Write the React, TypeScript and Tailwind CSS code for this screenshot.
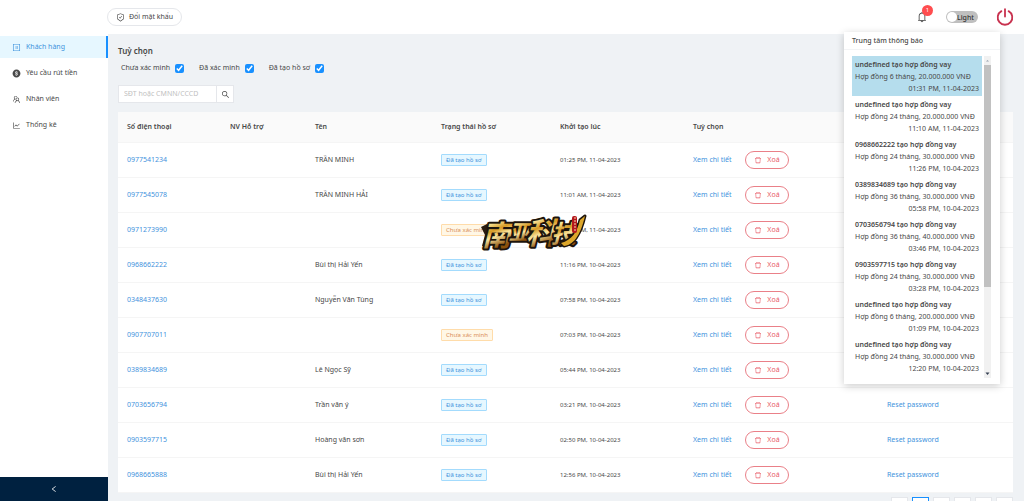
import React from 'react';
import {
  AiFillDollarCircle,
  AiOutlineBell,
  AiOutlineDelete,
  AiOutlineLeft,
  AiOutlineLineChart,
  AiOutlineProfile,
  AiOutlineSafetyCertificate,
  AiOutlineSearch,
  AiOutlineTeam,
} from 'react-icons/ai';

type Status = 'created' | 'unverified';

interface Customer {
  phone: string;
  name: string;
  status: Status;
  createdAt: string;
}

interface Notice {
  title: string;
  detail: string;
  time: string;
}

const customers: Customer[] = [
  { phone: '0977541234', name: 'TRẦN MINH', status: 'created', createdAt: '01:25 PM, 11-04-2023' },
  { phone: '0977545078', name: 'TRẦN MINH HẢI', status: 'created', createdAt: '11:01 AM, 11-04-2023' },
  { phone: '0971273990', name: '', status: 'unverified', createdAt: '12:11 AM, 11-04-2023' },
  { phone: '0968662222', name: 'Bùi thị Hải Yến', status: 'created', createdAt: '11:16 PM, 10-04-2023' },
  { phone: '0348437630', name: 'Nguyễn Văn Tùng', status: 'created', createdAt: '07:58 PM, 10-04-2023' },
  { phone: '0907707011', name: '', status: 'unverified', createdAt: '07:03 PM, 10-04-2023' },
  { phone: '0389834689', name: 'Lê Ngọc Sỹ', status: 'created', createdAt: '05:44 PM, 10-04-2023' },
  { phone: '0703656794', name: 'Trần văn ý', status: 'created', createdAt: '03:21 PM, 10-04-2023' },
  { phone: '0903597715', name: 'Hoàng văn sơn', status: 'created', createdAt: '02:50 PM, 10-04-2023' },
  { phone: '0968665888', name: 'Bùi thị Hải Yến', status: 'created', createdAt: '12:56 PM, 10-04-2023' },
];

const notices: Notice[] = [
  { title: 'undefined tạo hợp đồng vay', detail: 'Hợp đồng 6 tháng, 20.000.000 VNĐ', time: '01:31 PM, 11-04-2023' },
  { title: 'undefined tạo hợp đồng vay', detail: 'Hợp đồng 24 tháng, 20.000.000 VNĐ', time: '11:10 AM, 11-04-2023' },
  { title: '0968662222 tạo hợp đồng vay', detail: 'Hợp đồng 24 tháng, 30.000.000 VNĐ', time: '11:26 PM, 10-04-2023' },
  { title: '0389834689 tạo hợp đồng vay', detail: 'Hợp đồng 36 tháng, 30.000.000 VNĐ', time: '05:58 PM, 10-04-2023' },
  { title: '0703656794 tạo hợp đồng vay', detail: 'Hợp đồng 36 tháng, 40.000.000 VNĐ', time: '03:46 PM, 10-04-2023' },
  { title: '0903597715 tạo hợp đồng vay', detail: 'Hợp đồng 24 tháng, 30.000.000 VNĐ', time: '03:28 PM, 10-04-2023' },
  { title: 'undefined tạo hợp đồng vay', detail: 'Hợp đồng 6 tháng, 200.000.000 VNĐ', time: '01:09 PM, 10-04-2023' },
  { title: 'undefined tạo hợp đồng vay', detail: 'Hợp đồng 24 tháng, 30.000.000 VNĐ', time: '12:20 PM, 10-04-2023' },
];

const menu = [
  { label: 'Khách hàng', icon: AiOutlineProfile, active: true },
  { label: 'Yêu cầu rút tiền', icon: AiFillDollarCircle, active: false },
  { label: 'Nhân viên', icon: AiOutlineTeam, active: false },
  { label: 'Thống kê', icon: AiOutlineLineChart, active: false },
];

const columns = [
  { title: 'Số điện thoại', width: 'w-[103px]' },
  { title: 'NV Hỗ trợ', width: 'w-[85px]' },
  { title: 'Tên', width: 'w-[126px]' },
  { title: 'Trạng thái hồ sơ', width: 'w-[119px]' },
  { title: 'Khởi tạo lúc', width: 'w-[133px]' },
  { title: 'Tuỳ chọn', width: 'w-[194px]' },
  { title: '', width: 'w-[135px]' },
];

const filters = ['Chưa xác minh', 'Đã xác minh', 'Đã tạo hồ sơ'];

const pages = ['Trang trước', 'Trang 1', 'Trang 2', 'Trang 3', 'Trang 4', 'Trang sau'];

const Sidebar: React.FC = () => (
  <aside className="w-[108px] shrink-0 flex flex-col bg-white">
    <nav className="flex-1 flex flex-col gap-1 pt-[2px]">
      {menu.map(({ label, icon: Icon, active }) => (
        <a
          key={label}
          href="#"
          className={
            active
              ? 'h-[22px] flex items-center gap-[5px] pl-3 bg-[#e6f7ff] text-[#3f93dd] border-r-2 border-[#1890ff]'
              : 'h-[22px] flex items-center gap-[5px] pl-3'
          }
        >
          <Icon className="size-[9px]" />
          {label}
        </a>
      ))}
    </nav>
    <button aria-label="Thu gọn" className="h-6 flex items-center justify-center bg-[#002140] text-white">
      <AiOutlineLeft className="size-2" />
    </button>
  </aside>
);

const NoticePanel: React.FC = () => (
  <section className="absolute z-10 top-[32px] right-6 w-[156px] h-[352px] flex flex-col bg-white shadow-[0_2px_8px_rgba(0,0,0,0.2)]">
    <h2 className="h-[18px] px-2 flex items-center font-medium border-b border-gray-100">Trung tâm thông báo</h2>
    <div className="flex-1 flex gap-[2px] pt-[6px] pb-[6px] pl-2 pr-[9px]">
      <ul className="flex-1">
        {notices.map((n, i) => (
          <li key={i} className={i === 0 ? 'h-10 px-[3px] pt-[3px] bg-[#b5dded]' : 'h-10 px-[3px] pt-[3px]'}>
            <p className="leading-[12px] font-semibold whitespace-nowrap">{n.title}</p>
            <p className="leading-[12px] whitespace-nowrap">{n.detail}</p>
            <p className="leading-[11px] text-right">{n.time}</p>
          </li>
        ))}
      </ul>
      <div className="w-[7px] flex flex-col items-center justify-between bg-[#f1f1f1]">
        <svg viewBox="0 0 7 9" className="w-[7px] h-[9px] fill-gray-400">
          <path d="M2 5.5L3.5 4L5 5.5Z" />
        </svg>
        <div className="w-full h-[222px] mb-auto bg-[#c1c1c1]" />
        <svg viewBox="0 0 7 9" className="w-[7px] h-[9px] fill-gray-700">
          <path d="M1.5 3.5H5.5L3.5 6Z" />
        </svg>
      </div>
    </div>
  </section>
);

const PowerIcon: React.FC = () => (
  <svg viewBox="0 0 18 18" className="size-[18px]" fill="none" stroke="currentColor" strokeWidth="1.8" strokeLinecap="round">
    <path d="M5.4 3.1A7.3 7.3 0 1 0 12.6 3.1" />
    <path d="M9 1.2V8.6" />
  </svg>
);

const Header: React.FC = () => (
  <header className="relative h-[34px] shrink-0 flex items-center justify-between pl-[107px] pr-[10px] bg-white">
    <button className="h-[18px] flex items-center gap-1 px-2 rounded-full border border-gray-200">
      <AiOutlineSafetyCertificate className="size-[9px]" />
      Đổi mật khẩu
    </button>
    <div className="flex items-center">
      <button aria-label="Thông báo" className="relative mr-[18px]">
        <AiOutlineBell className="size-3" />
        <span className="absolute -top-[6px] left-[6px] size-[11px] rounded-full bg-[#ff4d4f] text-white text-[6px] leading-[11px] text-center">
          1
        </span>
      </button>
      <button
        role="switch"
        aria-checked="false"
        className="w-8 h-3 mr-[18px] flex items-center justify-between pl-px pr-1 rounded-full bg-[#bfbfbf] text-[#333]"
      >
        <span className="size-[10px] rounded-full bg-white" />
        <span className="font-medium leading-[11px]">Light</span>
      </button>
      <button aria-label="Đăng xuất" className="text-[#c8324f]">
        <PowerIcon />
      </button>
    </div>
    <NoticePanel />
  </header>
);

const StatusTag: React.FC<{ status: Status }> = ({ status }) =>
  status === 'created' ? (
    <span className="inline-block px-1 border border-[#a3dbfd] bg-[#e6f7ff] text-[#3f93dd] text-[6px] leading-[10px] rounded-[1px]">
      Đã tạo hồ sơ
    </span>
  ) : (
    <span className="inline-block px-1 border border-[#ffdcaa] bg-[#fff7e6] text-[#d98d55] text-[6px] leading-[10px] rounded-[1px]">
      Chưa xác minh
    </span>
  );

const CustomerTable: React.FC = () => (
  <table className="w-full table-fixed bg-white text-left">
    <thead>
      <tr className="h-[30px] bg-[#fafafa] border-b border-[#f5f5f5]">
        {columns.map((c, i) => (
          <th key={i} className={`${c.width} pl-[9px] font-semibold`}>
            {c.title}
          </th>
        ))}
      </tr>
    </thead>
    <tbody>
      {customers.map((c) => (
        <tr key={c.phone} className="h-[35px] border-b border-[#f5f5f5]">
          <td className="pl-[9px]">
            <a href="#" className="text-[#3f93dd]">{c.phone}</a>
          </td>
          <td />
          <td className="pl-[9px]">{c.name}</td>
          <td className="pl-[9px]">
            <StatusTag status={c.status} />
          </td>
          <td className="pl-[9px] text-[6px]">{c.createdAt}</td>
          <td className="pl-[9px]">
            <div className="flex items-center gap-3">
              <a href="#" className="w-10 whitespace-nowrap text-[#3f93dd]">Xem chi tiết</a>
              <button className="w-11 h-[18px] flex items-center justify-center gap-[5px] rounded-full border border-[#ea8088] text-[#e85a66]">
                <AiOutlineDelete className="size-2" />
                Xoá
              </button>
            </div>
          </td>
          <td className="pl-[9px]">
            <a href="#" className="text-[#3f93dd]">Reset password</a>
          </td>
        </tr>
      ))}
    </tbody>
  </table>
);

const Pagination: React.FC = () => (
  <nav className="flex justify-end gap-1 pt-1">
    {pages.map((p, i) => (
      <button
        key={p}
        aria-label={p}
        className={
          i === 1
            ? 'size-[17px] shrink-0 bg-white border border-[#1890ff]'
            : 'size-[17px] shrink-0 bg-white border border-gray-200'
        }
      />
    ))}
  </nav>
);

const Brand: React.FC = () => (
  <svg viewBox="0 0 112 44" className="absolute z-10 w-[112px] h-[44px] top-[210px] left-[478px]">
    <defs>
      <linearGradient id="gold" x1="0" y1="0" x2="0.3" y2="1">
        <stop offset="0.1" stopColor="#c98a1c" />
        <stop offset="0.3" stopColor="#fff0a8" />
        <stop offset="0.5" stopColor="#d69a25" />
        <stop offset="0.65" stopColor="#fbe6a0" />
        <stop offset="0.9" stopColor="#8a500a" />
      </linearGradient>
    </defs>
    <path d="M3 17L9 14L13 20L10 35L4 36L7 25Z" fill="#2a1d10" />
    <g
      fontFamily="'Noto Sans CJK SC', sans-serif"
      fontWeight="700"
      fontStyle="italic"
      fill="url(#gold)"
      stroke="#1d140c"
      strokeWidth="4"
      strokeLinejoin="round"
      paintOrder="stroke"
    >
      <text x="4" y="36" fontSize="29">南</text>
      <text x="31" y="30" fontSize="21">亚</text>
      <text x="48" y="34" fontSize="30">科</text>
      <text x="73" y="33" fontSize="25">技</text>
    </g>
    <path
      d="M86 36C95 35 102 27 107 6L102 10C99 22 94 30 83 33Z"
      fill="#dca62a"
      stroke="#1d140c"
      strokeWidth="3"
      strokeLinejoin="round"
      paintOrder="stroke"
    />
    <rect x="94" y="6" width="5" height="17" rx="2" fill="#b3161c" />
    <path d="M96 8h2M96 11h2M96 14h2M96 17h2M96 20h2" stroke="#f7d9b0" strokeWidth="1" />
  </svg>
);

const App: React.FC = () => {
  return (
    <div className="relative h-screen flex flex-col overflow-hidden bg-[#eff2f5] font-['Noto_Sans','Noto_Sans_CJK_SC',sans-serif] text-[7px] leading-[12px] text-[#484848]">
      <Header />
      <div className="flex-1 min-h-0 flex">
        <Sidebar />
        <main className="flex-1 min-w-0 overflow-hidden pl-[10px] pr-[11px] pt-[11px]">
          <h1 className="text-[8px] font-semibold">Tuỳ chọn</h1>
          <div className="flex items-center gap-[15px] pl-[3px] pt-[5px]">
            {filters.map((f) => (
              <label key={f} className="flex items-center gap-[5px]">
                {f}
                <input type="checkbox" defaultChecked className="size-[9px] accent-[#1890ff]" />
              </label>
            ))}
          </div>
          <div className="flex w-[116px] h-[18px] mt-[11px] mb-[9px] bg-white border border-gray-200">
            <input
              aria-label="Tìm kiếm"
              placeholder="SĐT hoặc CMNN/CCCD"
              className="flex-1 min-w-0 px-[5px] outline-none placeholder:text-[#bfbfbf]"
            />
            <button aria-label="Tìm" className="w-[17px] flex items-center justify-center border-l border-gray-200">
              <AiOutlineSearch className="size-[9px]" />
            </button>
          </div>
          <CustomerTable />
          <Pagination />
        </main>
      </div>
      <Brand />
    </div>
  );
};

export default App;
